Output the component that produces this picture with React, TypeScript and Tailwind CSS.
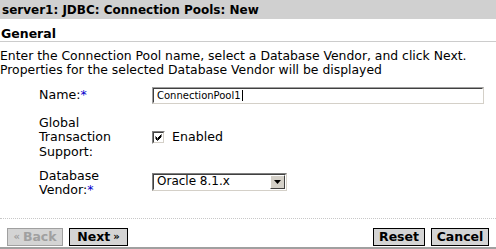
export default function App() {
  return (
    <div className="w-[496px] h-[249px] bg-white text-black overflow-hidden flex flex-col font-['DejaVu_Sans',Verdana,sans-serif]">
      <div className="h-[19px] bg-[#d0d0d0] flex items-center px-[2px] text-[12px] font-bold leading-none">
        server1: JDBC: Connection Pools: New
      </div>

      <div className="mt-[8px] px-[1px] border-b border-[#cccccc] text-[12.5px] font-bold leading-[14px]">
        General
      </div>

      <p className="mt-[7px] text-[12.4px] leading-[14px]">
        Enter the Connection Pool name, select a Database Vendor, and click Next.
        <br />
        Properties for the selected Database Vendor will be displayed
      </p>

      <div className="mt-[10px] flex flex-col text-[12.6px] leading-[14.5px]">
        <div className="flex items-center">
          <div className="w-[152px] pl-[39px]">
            Name:<span className="text-[#0000cc]">*</span>
          </div>
          <div className="w-[332px] h-[17px] border border-t-[#a0a0a0] border-l-[#a0a0a0] border-r-[#d4d0c8] border-b-[#d4d0c8]">
            <div className="h-full border border-t-[#404040] border-l-[#404040] border-r-white border-b-white bg-white flex items-center pl-[3px] text-[10px] leading-none">
              ConnectionPool1
              <span className="ml-[1px] w-px h-[11px] bg-black" />
            </div>
          </div>
        </div>

        <div className="mt-[11.5px] flex items-center">
          <div className="w-[152px] pl-[39px]">
            Global
            <br />
            Transaction
            <br />
            Support:
          </div>
          <div className="flex items-center gap-[7px]">
            <span className="w-[13px] h-[13px] border border-t-[#808080] border-l-[#808080] border-r-white border-b-white">
              <span className="block w-full h-full border border-t-[#404040] border-l-[#404040] border-r-[#d4d0c8] border-b-[#d4d0c8] bg-white">
                <svg viewBox="0 0 9 9" className="w-[9px] h-[9px]">
                  <path d="M1.5 3.5 L3.5 5.5 L7.5 1.5 M1.5 4.5 L3.5 6.5 L7.5 2.5 M1.5 5.5 L3.5 7.5 L7.5 3.5" stroke="#000" strokeWidth="1" fill="none" />
                </svg>
              </span>
            </span>
            <span>Enabled</span>
          </div>
        </div>

        <div className="mt-[9.5px] flex items-start">
          <div className="w-[152px] pl-[39px]">
            Database
            <br />
            Vendor:<span className="text-[#0000cc]">*</span>
          </div>
          <div className="mt-[4px] w-[135px] h-[18px] border border-t-[#808080] border-l-[#808080] border-r-[#d4d0c8] border-b-[#d4d0c8]">
            <div className="h-full border border-t-[#404040] border-l-[#404040] border-r-white border-b-white bg-white flex items-center text-[12px]">
              <span className="flex-1 pl-[3px]">Oracle 8.1.x</span>
              <span className="w-[15px] h-full bg-[#d4d0c8] border border-t-white border-l-white border-r-[#404040] border-b-[#404040] flex items-center justify-center">
                <svg viewBox="0 0 7 4" className="w-[7px] h-[4px]">
                  <path d="M0 0 H7 L3.5 4 Z" fill="#000" />
                </svg>
              </span>
            </div>
          </div>
        </div>
      </div>

      <div className="mt-auto border-t border-dotted border-[#c8c8c8]" />

      <div className="mt-[9px] mb-[1px] flex items-center px-[7px] text-[12.5px] font-bold leading-none">
        <div className="flex gap-[6px]">
          <button className="h-[18px] w-[56px] bg-[#d4d4d4] border border-[#a0a0a0] text-[#a0a0a0] flex items-center justify-center gap-[3px]">
            <span className="text-[10px]">«</span>Back
          </button>
          <button className="h-[18px] w-[59px] bg-[#d4d4d4] border border-black flex items-center justify-center gap-[3px]">
            Next<span className="text-[10px]">»</span>
          </button>
        </div>
        <div className="ml-auto flex gap-[6px]">
          <button className="h-[18px] w-[52px] bg-[#d4d4d4] border border-black flex items-center justify-center">
            Reset
          </button>
          <button className="h-[18px] w-[58px] bg-[#d4d4d4] border border-black flex items-center justify-center">
            Cancel
          </button>
        </div>
      </div>

      <div className="h-[2px] bg-[#a0a0a0]" />
    </div>
  );
}
